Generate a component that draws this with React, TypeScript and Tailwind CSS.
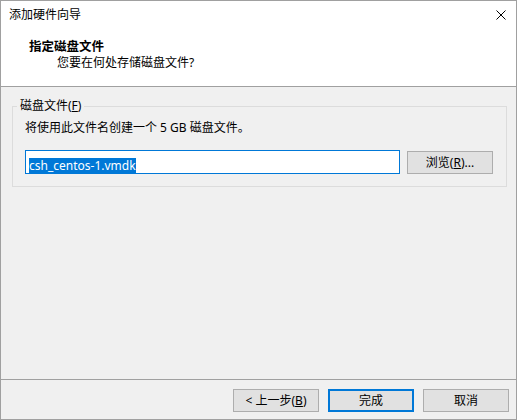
import React from "react";

const font = { fontFamily: '"Noto Sans", "Noto Sans CJK SC", sans-serif' };

function Btn({ children, primary }: { children: React.ReactNode; primary?: boolean }) {
  return (
    <div
      className={
        "flex h-[23px] w-[86px] items-center justify-center bg-[#e1e1e1] text-[12px] leading-[16px] text-black " +
        (primary ? "border-2 border-[#0078d7]" : "border border-[#adadad]")
      }
    >
      {children}
    </div>
  );
}

export default function App() {
  return (
    <div className="h-[420px] w-[519px] bg-white" style={font}>
      <div className="flex h-[420px] w-[517px] flex-col border border-[#a0a0a0] bg-white">
        {/* title + header */}
        <div className="h-[86px] border-b border-[#a0a0a0] bg-white">
          <div className="flex h-[28px] items-center justify-between pl-[8px] pr-[10px]">
            <span className="text-[12px] leading-[16px] text-black">添加硬件向导</span>
            <svg width="10" height="10" viewBox="0 0 10 10" className="mr-[0px]">
              <path d="M0.5 0.5 L9.5 9.5 M9.5 0.5 L0.5 9.5" stroke="#000" strokeWidth="1" />
            </svg>
          </div>
          <div className="pl-[28px] pt-[10px]">
            <div className="text-[12.5px] font-bold leading-[16px] text-black">指定磁盘文件</div>
          </div>
          <div className="pl-[56px]">
            <div className="text-[12px] leading-[16px] text-black">您要在何处存储磁盘文件?</div>
          </div>
        </div>

        {/* body */}
        <div className="flex-1 bg-[#f0f0f0] pl-[11px] pt-[19px]">
          <div className="relative w-[495px] border border-[#dcdcdc] pb-[12px] pl-[12px] pr-[13px] pt-[13px]">
            <div className="absolute left-[4px] top-[-9px] bg-[#f0f0f0] px-[3px] text-[12px] leading-[16px] text-black">
              磁盘文件(<span className="underline">F</span>)
            </div>
            <div className="text-[12px] leading-[16px] text-black">将使用此文件名创建一个 5 GB 磁盘文件。</div>
            <div className="mt-[14px] flex items-end gap-[7px]">
              <div className="h-[24px] w-[375px] border border-[#0078d7] bg-white pl-[3px] pt-[1px]">
                <span className="inline-block bg-[#0078d7] text-[12px] leading-[15px] text-white">csh_centos-1.vmdk</span>
              </div>
              <Btn>
                浏览(<span className="underline">R</span>)...
              </Btn>
            </div>
          </div>
        </div>

        {/* footer */}
        <div className="flex h-[40px] justify-end gap-[9px] border-t border-[#a0a0a0] bg-[#f0f0f0] pr-[7px] pt-[9px]">
          <Btn>
            &lt; 上一步(<span className="underline">B</span>)
          </Btn>
          <Btn primary>完成</Btn>
          <Btn>取消</Btn>
        </div>
      </div>
    </div>
  );
}
